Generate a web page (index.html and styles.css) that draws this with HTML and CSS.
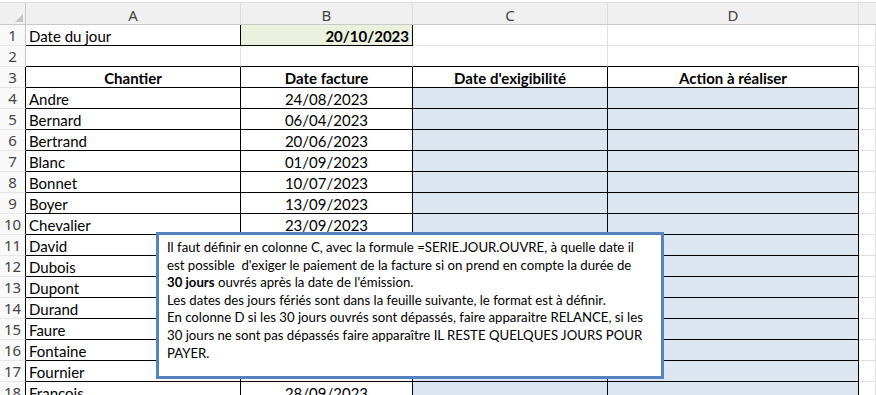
FILE: index.html
```html
<!DOCTYPE html>
<html lang="fr">
<head>
  <meta charset="UTF-8">
  <title>Relances factures</title>
  <link rel="stylesheet" href="styles.css">
</head>
<body>
  <div class="topbar"></div>

  <div class="sheet" id="sheet">
    <div class="corner"><span class="select-all"></span></div>
    <div class="col-head">A</div>
    <div class="col-head">B</div>
    <div class="col-head">C</div>
    <div class="col-head">D</div>
    <div class="col-head last"></div>
  </div>

  <!-- Note posée sur la feuille -->
  <div class="comment">
    Il faut définir en colonne C, avec la formule =SERIE.JOUR.OUVRE, à quelle date il<br>
    est possible &nbsp;d'exiger le paiement de la facture si on prend en compte la durée de<br>
    <b>30 jours</b> ouvrés après la date de l'émission.<br>
    Les dates des jours fériés sont dans la feuille suivante, le format est à définir.<br>
    En colonne D si les 30 jours ouvrés sont dépassés, faire apparaitre RELANCE, si les<br>
    30 jours ne sont pas dépassés faire apparaître IL RESTE QUELQUES JOURS POUR<br>
    PAYER.
  </div>

  <script>
    const factures = [
      ["Andre", "24/08/2023"],
      ["Bernard", "06/04/2023"],
      ["Bertrand", "20/06/2023"],
      ["Blanc", "01/09/2023"],
      ["Bonnet", "10/07/2023"],
      ["Boyer", "13/09/2023"],
      ["Chevalier", "23/09/2023"],
      ["David", "18/08/2023"],
      ["Dubois", "04/09/2023"],
      ["Dupont", "12/07/2023"],
      ["Durand", "29/08/2023"],
      ["Faure", "15/09/2023"],
      ["Fontaine", "07/08/2023"],
      ["Fournier", "26/09/2023"],
      ["Francois", "28/09/2023"]
    ];

    const sheet = document.getElementById("sheet");

    function addRow(num, cells, rowClass) {
      const head = document.createElement("div");
      head.className = "row-head " + (rowClass || "");
      head.textContent = num;
      sheet.appendChild(head);

      cells.forEach(c => {
        const cell = document.createElement("div");
        cell.className = "cell " + (c.cls || "");
        if (c.bold) {
          const b = document.createElement("b");
          b.textContent = c.text || "";
          cell.appendChild(b);
        } else {
          cell.textContent = c.text || "";
        }
        sheet.appendChild(cell);
      });
    }

    // Ligne 1 : date du jour
    addRow(1, [
      { text: "Date du jour", cls: "boxed" },
      { text: "20/10/2023", cls: "today right", bold: true },
      {}, {}, {}
    ]);

    // Ligne 2 : vide, bord haut du tableau
    addRow(2, [
      { cls: "table-top" }, { cls: "table-top" }, { cls: "table-top" }, { cls: "table-top" }, {}
    ]);

    // Ligne 3 : en-têtes
    addRow(3, [
      { text: "Chantier", cls: "tbl center", bold: true },
      { text: "Date facture", cls: "tbl center", bold: true },
      { text: "Date d'exigibilité", cls: "tbl center", bold: true },
      { text: "Action à réaliser", cls: "tbl center", bold: true },
      {}
    ], "in-table");

    factures.forEach((f, i) => {
      addRow(i + 4, [
        { text: f[0], cls: "tbl" },
        { text: f[1], cls: "tbl center" },
        { cls: "tbl todo" },
        { cls: "tbl todo" },
        {}
      ], "in-table");
    });
  </script>
</body>
</html>
```

FILE: styles.css
```css
* {
  margin: 0;
  padding: 0;
  box-sizing: border-box;
}

body {
  background: #ffffff;
  overflow: hidden;
  font-family: 'Lato', sans-serif;
  color: #000000;
}

.topbar {
  height: 3px;
  background: #ffffff;
  border-bottom: 1px solid #dcdcdc;
}

.sheet {
  display: grid;
  grid-template-columns: 26px 215px 172px 195px 251px 1fr;
  grid-auto-rows: 21px;
  grid-template-rows: 22px;
}

/* En-têtes de colonnes et de lignes */
.corner,
.col-head {
  background: #f0f0f0;
  border-bottom: 1px solid #c8c8c8;
  border-right: 1px solid #dadada;
}

.corner {
  position: relative;
  border-right-color: #c8c8c8;
}

.select-all {
  position: absolute;
  right: 2px;
  bottom: 2px;
  width: 0;
  height: 0;
  border-left: 8px solid transparent;
  border-bottom: 8px solid #c4c4c4;
}

.col-head {
  font-family: 'Noto Sans', sans-serif;
  font-size: 15px;
  color: #444444;
  text-align: center;
  line-height: 25px;
}

.col-head.last {
  border-right: none;
}

.row-head {
  background: #f9f9f9;
  border-right: 1px solid #c8c8c8;
  border-bottom: 1px solid #e6e6e6;
  font-family: 'Noto Sans', sans-serif;
  font-size: 15px;
  color: #444444;
  text-align: center;
  line-height: 21px;
}

.row-head.in-table {
  border-right-color: #000000;
}

/* Cellules */
.cell {
  border-right: 1px solid #e1e1e1;
  border-bottom: 1px solid #e1e1e1;
  font-size: 15px;
  line-height: 22px;
  padding: 0 3px;
  white-space: nowrap;
  overflow: hidden;
}

.cell.boxed {
  border-right-color: #000000;
  border-bottom-color: #000000;
}

.cell.today {
  background: #ebf1de;
  border-right-color: #000000;
  border-bottom-color: #000000;
}

.cell.table-top {
  border-bottom-color: #000000;
}

.cell.tbl {
  border-right-color: #000000;
  border-bottom-color: #000000;
}

.cell.todo {
  background: #dce6f1;
}

.right {
  text-align: right;
}

.center {
  text-align: center;
}

/* Note */
.comment {
  position: absolute;
  left: 156px;
  top: 232px;
  width: 508px;
  height: 147px;
  background: #ffffff;
  border: 3px solid #5683bf;
  padding: 4px 8px;
  font-size: 13.2px;
  line-height: 17.6px;
  white-space: nowrap;
}
```
